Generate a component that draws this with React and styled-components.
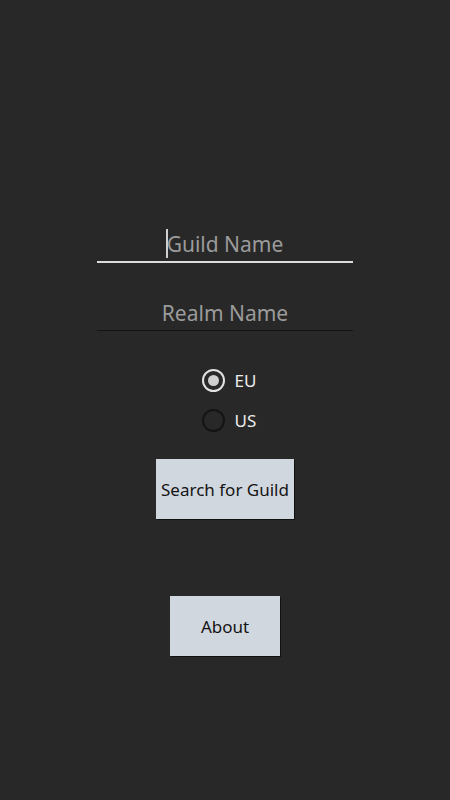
import React, { useState } from 'react'
import styled, { createGlobalStyle } from 'styled-components';

const GlobalStyle = createGlobalStyle`
    html, body {
        margin:0;
        padding:0;
        background-color:#282828;
    }
    body {
        font-family:"Noto Sans", "Open Sans", sans-serif;
    }
`;

const App = () => {
    const [region, setRegion] = useState('EU');

    return (
        <Page>
            <GlobalStyle />
            <Form>
                <FieldWrap>
                    <Field placeholder="Guild Name" active />
                    <Caret />
                </FieldWrap>
                <FieldWrap>
                    <Field placeholder="Realm Name" />
                </FieldWrap>
                <RadioGroup>
                    {['EU', 'US'].map(r => (
                        <RadioRow key={r} onClick={() => setRegion(r)}>
                            <RadioCircle checked={region === r} />
                            <RadioLabel>{r}</RadioLabel>
                        </RadioRow>
                    ))}
                </RadioGroup>
                <Button>Search for Guild</Button>
                <AboutButton>About</AboutButton>
            </Form>
        </Page>
    )
}

export default App;



// styled components

const Page = styled.div`
    min-height:800px;
    background-color:#282828;
    display:flex;
    justify-content:center;
    padding-top:225px;
    box-sizing:border-box;
`;

const Form = styled.div`
    display:flex;
    flex-direction:column;
    align-items:center;
`;

const FieldWrap = styled.div`
    position:relative;
    width:256px;
    margin-bottom:30px;
`;

const Field = styled.input`
    width:100%;
    height:38px;
    box-sizing:border-box;
    background:transparent;
    border:none;
    border-bottom:${p => p.active ? '2px solid #dcdcdc' : '1px solid #141414'};
    outline:none;
    text-align:center;
    font-family:"Noto Sans", "Open Sans", sans-serif;
    font-size:21px;
    color:#e0e0e0;
    padding:2px 0 0 0;
    caret-color:transparent;

    &::placeholder{
        color:#9b9b9b;
    }
`;

const Caret = styled.span`
    position:absolute;
    left:69px;
    top:4px;
    width:2px;
    height:29px;
    background-color:#cfcfcf;
`;

const RadioGroup = styled.div`
    display:flex;
    flex-direction:column;
    margin-top:-1px;
    margin-bottom:19px;
    margin-left:8px;
`;

const RadioRow = styled.div`
    display:flex;
    align-items:center;
    height:40px;
    gap:10px;
    cursor:pointer;
`;

const RadioCircle = styled.span`
    width:23px;
    height:23px;
    box-sizing:border-box;
    border-radius:50%;
    border:2px solid ${p => p.checked ? '#e2e2e2' : '#141414'};
    display:flex;
    align-items:center;
    justify-content:center;

    &::after{
        content:'';
        width:11px;
        height:11px;
        border-radius:50%;
        background-color:${p => p.checked ? '#cfcfcf' : 'transparent'};
    }
`;

const RadioLabel = styled.span`
    font-size:17px;
    color:#ececec;
`;

const Button = styled.button`
    height:60px;
    padding:0 5px;
    background-color:#d1d7df;
    border:none;
    box-shadow:1px 1px 0 #111111;
    font-family:"Noto Sans", "Open Sans", sans-serif;
    font-size:17px;
    color:#141414;
    cursor:pointer;
`;

const AboutButton = styled(Button)`
    width:110px;
    margin-top:77px;
`;
